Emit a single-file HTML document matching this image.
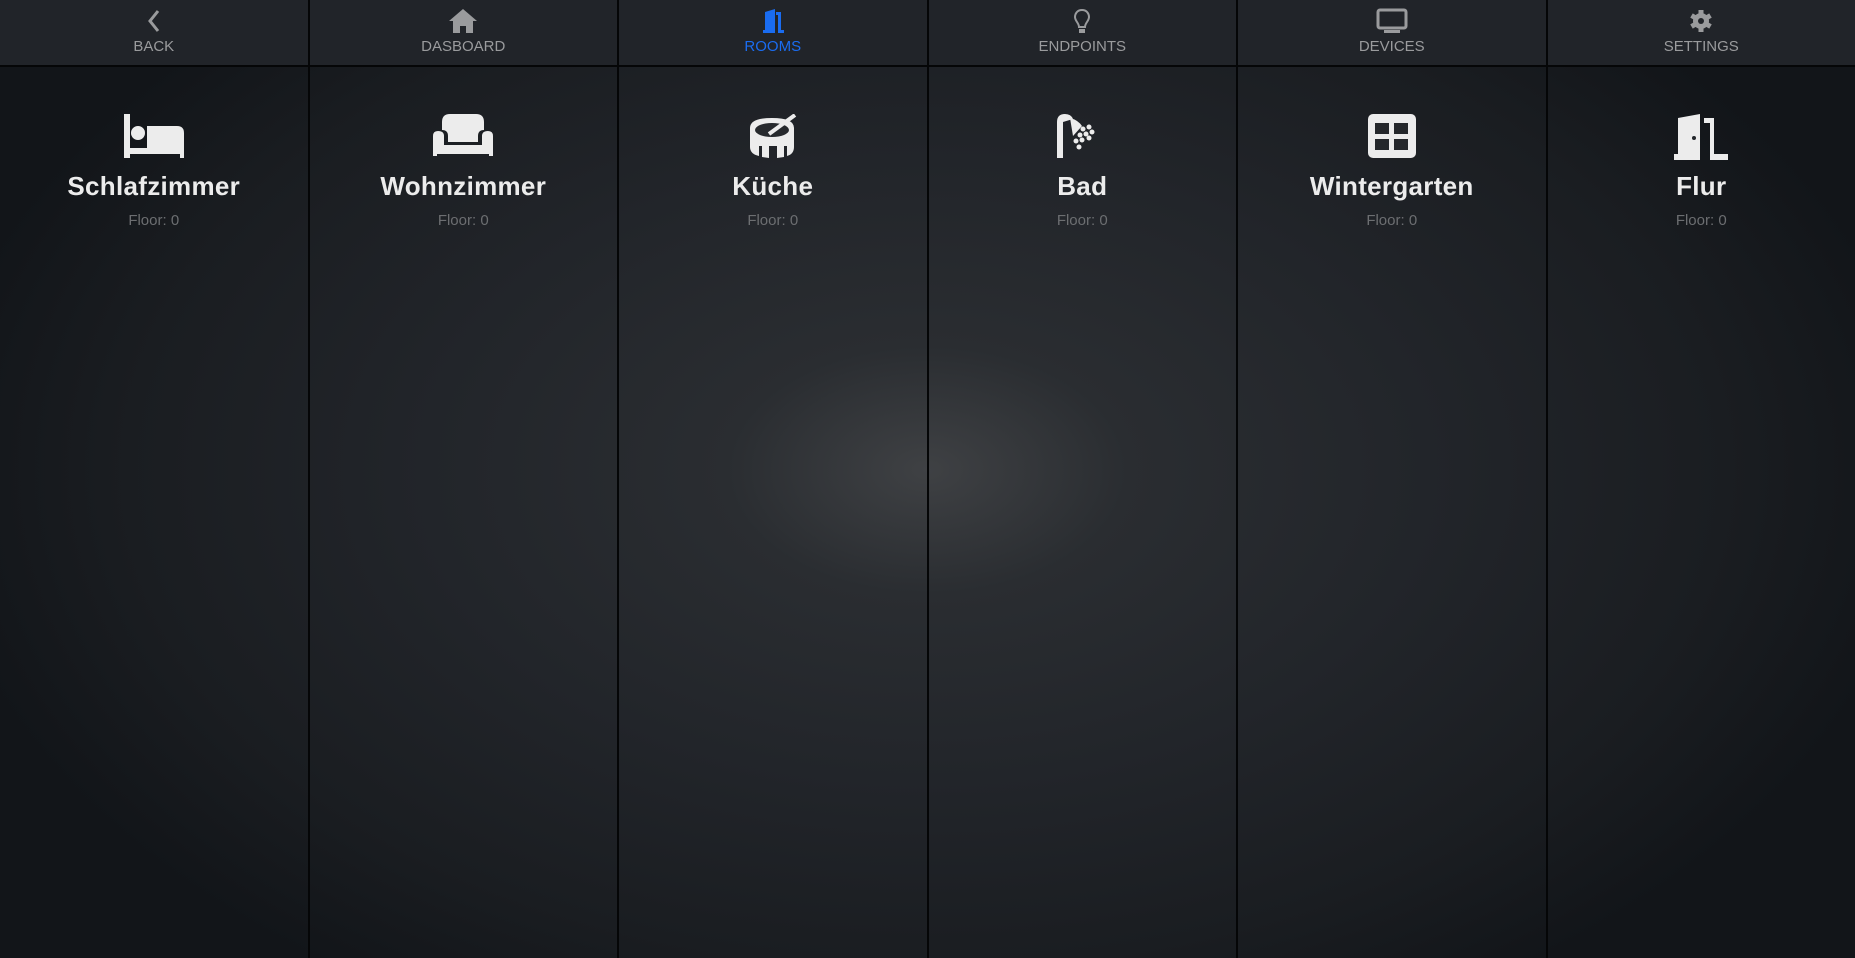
<!DOCTYPE html>
<html><head><meta charset="utf-8"><style>
*{margin:0;padding:0;box-sizing:border-box}
body{width:1855px;height:958px;overflow:hidden;font-family:"Liberation Sans",sans-serif;
background:radial-gradient(ellipse 1000px 620px at 927px 470px,#3f4144 0%,#2a2d31 20%,#22252a 50%,#1a1d21 80%,#121519 100%);}
.nav{position:absolute;top:0;left:0;width:1855px;height:67px;background:#212429;border-bottom:2px solid #050607;display:flex}
.nav div{flex:1;border-right:2px solid #050607;text-align:center;color:#9a9b9d;font-size:15px;position:relative}
.nav div:last-child{border-right:none}
.nav svg{position:absolute;left:50%;top:8px;transform:translateX(-50%)}
.nav span{position:absolute;left:0;right:0;top:38px}
.nav .act{color:#1a6cf0}
.cols{position:absolute;top:67px;left:0;width:1855px;height:891px;display:flex}
.cols div{flex:1;border-right:2px solid #050607;text-align:center;position:relative}
.cols div:last-child{border-right:none}
.cols svg{position:absolute;left:50%;top:47px;transform:translateX(-50%)}
.cols h2{position:absolute;left:0;right:0;top:104px;font-size:26px;font-weight:bold;color:#ececec;letter-spacing:0.3px}
.cols p{position:absolute;left:0;right:0;top:145px;font-size:15px;color:#6c6e71}
</style></head><body>
<div class="nav">
<div><svg width="20" height="26" viewBox="0 0 20 26"><path d="M14 3 L6 13 L14 23" stroke="#9a9b9d" stroke-width="3" fill="none"/></svg><span>BACK</span></div>
<div><svg width="30" height="26" viewBox="0 0 30 26"><path d="M15 1 L29 13 L25 13 L25 25 L18 25 L18 18 L12 18 L12 25 L5 25 L5 13 L1 13 Z" fill="#9a9b9d"/></svg><span>DASBOARD</span></div>
<div class="act"><svg width="26" height="26" viewBox="0 0 26 26"><path d="M3 25 L3 22 L5 22 L5 4 L15 1 L15 25 Z M16 4 L21 4 L21 22 L24 22 L24 25 L18 25 L18 7 L16 7Z" fill="#1a6cf0"/></svg><span>ROOMS</span></div>
<div><svg width="20" height="26" viewBox="0 0 20 26"><path d="M10 2 C5 2 3 6 3 9 C3 13 7 15 7 19 L13 19 C13 15 17 13 17 9 C17 6 15 2 10 2Z" stroke="#9a9b9d" stroke-width="2" fill="none"/><rect x="7" y="21" width="6" height="4" fill="#9a9b9d"/></svg><span>ENDPOINTS</span></div>
<div><svg width="34" height="26" viewBox="0 0 34 26"><rect x="3" y="2" width="28" height="18" rx="2" stroke="#9a9b9d" stroke-width="3" fill="none"/><rect x="9" y="22" width="16" height="3" fill="#9a9b9d"/></svg><span>DEVICES</span></div>
<div><svg width="26" height="26" viewBox="0 0 26 26"><g fill="#9a9b9d"><circle cx="13" cy="13" r="8"/><g stroke="#9a9b9d" stroke-width="5"><line x1="13" y1="2" x2="13" y2="24"/><line x1="3.5" y1="7.5" x2="22.5" y2="18.5"/><line x1="3.5" y1="18.5" x2="22.5" y2="7.5"/></g></g><circle cx="13" cy="13" r="3" fill="#212429"/></svg><span>SETTINGS</span></div>
</div>
<div class="cols">
<div><svg width="62" height="44" viewBox="0 0 62 44"><rect x="1" y="0" width="6" height="44" fill="#ececec"/><rect x="1" y="34" width="60" height="6" fill="#ececec"/><circle cx="15" cy="19" r="7" fill="#ececec"/><path d="M24 12 L54 12 Q61 12 61 19 L61 44 L57 44 L57 34 L24 34Z" fill="#ececec"/></svg><h2>Schlafzimmer</h2><p>Floor: 0</p></div>
<div><svg width="62" height="44" viewBox="0 0 62 44"><path d="M10 8 Q10 0 18 0 L44 0 Q52 0 52 8 L52 16 Q46 16 46 22 L46 28 L16 28 L16 22 Q16 16 10 16Z" fill="#ececec"/><path d="M1 22 Q1 17 6 17 Q12 17 12 22 L12 31 L50 31 L50 22 Q50 17 56 17 Q61 17 61 22 L61 42 L57 42 L57 40 L5 40 L5 42 L1 42Z" fill="#ececec"/></svg><h2>Wohnzimmer</h2><p>Floor: 0</p></div>
<div><svg width="52" height="44" viewBox="0 0 52 44"><path d="M3 14 Q3 4 25 4 Q47 4 47 14 L47 33 Q47 40 40 42 L40 32 L37 32 L37 43 L30 44 L30 32 L22 32 L22 44 L15 43 L15 32 L12 32 L12 42 Q3 40 3 33Z" fill="#ececec"/><ellipse cx="25" cy="16" rx="17" ry="7" fill="#26292d"/><line x1="22" y1="20" x2="48" y2="1" stroke="#ececec" stroke-width="4"/></svg><h2>Küche</h2><p>Floor: 0</p></div>
<div><svg width="52" height="44" viewBox="0 0 52 44"><path d="M1 44 L1 8 Q1 0 9 0 Q15 0 17 5 L7 8 L7 44Z" fill="#ececec"/><path d="M14 4 Q22 6 26 12 L17 22Z" fill="#ececec"/><g fill="#ececec"><circle cx="27" cy="15" r="2.5"/><circle cx="33" cy="13" r="2.5"/><circle cx="24" cy="21" r="2.5"/><circle cx="30" cy="20" r="2.5"/><circle cx="36" cy="18" r="2.5"/><circle cx="20" cy="27" r="2.5"/><circle cx="26" cy="26" r="2.5"/><circle cx="33" cy="24" r="2.5"/><circle cx="23" cy="33" r="2.5"/></g></svg><h2>Bad</h2><p>Floor: 0</p></div>
<div><svg width="50" height="44" viewBox="0 0 50 44"><rect x="1" y="0" width="48" height="44" rx="5" fill="#ececec"/><rect x="8" y="9" width="14" height="11" fill="#24272b"/><rect x="27" y="9" width="14" height="11" fill="#24272b"/><rect x="8" y="25" width="14" height="11" fill="#24272b"/><rect x="27" y="25" width="14" height="11" fill="#24272b"/></svg><h2>Wintergarten</h2><p>Floor: 0</p></div>
<div><svg width="56" height="46" viewBox="0 0 56 46"><path d="M1 46 L1 40 L5 40 L5 4 L27 0 L27 46Z M31 4 L41 4 L41 40 L55 40 L55 46 L37 46 L37 9 L31 9Z" fill="#ececec"/><circle cx="21" cy="24" r="2" fill="#24272b"/></svg><h2>Flur</h2><p>Floor: 0</p></div>
</div>
</body></html>
